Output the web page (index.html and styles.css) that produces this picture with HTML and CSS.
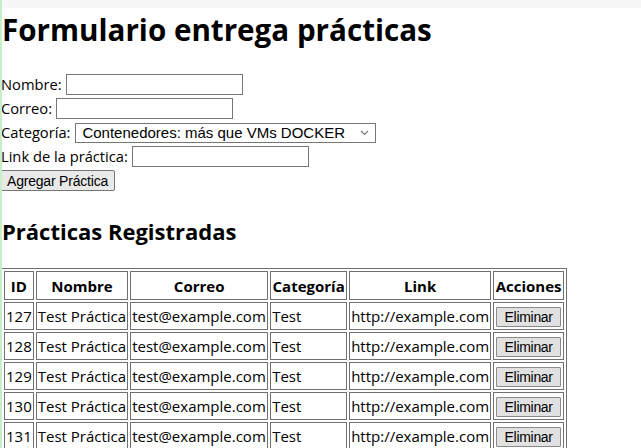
FILE: index.html
```html
<!DOCTYPE html>
<html lang="es">
<head>
<meta charset="utf-8">
<title>Formulario entrega prácticas</title>
<link rel="stylesheet" href="styles.css">
</head>
<body>
<div class="topbar"></div>
<div class="page">
  <h1 class="title">Formulario entrega prácticas</h1>
  <form class="form">
    <div class="row"><label>Nombre:</label><input class="field" type="text"></div>
    <div class="row"><label>Correo:</label><input class="field" type="text"></div>
    <div class="row"><label>Categoría:</label>
      <span class="select-wrap">
        <select class="select"><option>Contenedores: más que VMs DOCKER</option></select>
        <svg class="chev" width="9" height="6" viewBox="0 0 9 6"><path d="M1 1 L4.5 4.5 L8 1" fill="none" stroke="#777" stroke-width="1.2"/></svg>
      </span>
    </div>
    <div class="row"><label>Link de la práctica:</label><input class="field" type="text"></div>
    <div class="row"><button class="btn" type="button">Agregar Práctica</button></div>
  </form>
  <h2 class="subtitle">Prácticas Registradas</h2>
  <table class="grid">
    <thead>
      <tr><th class="c-id">ID</th><th class="c-nom">Nombre</th><th class="c-cor">Correo</th><th class="c-cat">Categoría</th><th class="c-lnk">Link</th><th class="c-acc">Acciones</th></tr>
    </thead>
    <tbody>
      <tr><td>127</td><td>Test Práctica</td><td>test@example.com</td><td>Test</td><td>http://example.com</td><td class="act"><button class="del" type="button">Eliminar</button></td></tr>
      <tr><td>128</td><td>Test Práctica</td><td>test@example.com</td><td>Test</td><td>http://example.com</td><td class="act"><button class="del" type="button">Eliminar</button></td></tr>
      <tr><td>129</td><td>Test Práctica</td><td>test@example.com</td><td>Test</td><td>http://example.com</td><td class="act"><button class="del" type="button">Eliminar</button></td></tr>
      <tr><td>130</td><td>Test Práctica</td><td>test@example.com</td><td>Test</td><td>http://example.com</td><td class="act"><button class="del" type="button">Eliminar</button></td></tr>
      <tr><td>131</td><td>Test Práctica</td><td>test@example.com</td><td>Test</td><td>http://example.com</td><td class="act"><button class="del" type="button">Eliminar</button></td></tr>
    </tbody>
  </table>
</div>
</body>
</html>
```

FILE: styles.css
```css
html, body {
  margin: 0;
  padding: 0;
  background: #ffffff;
  overflow: hidden;
}
body {
  position: relative;
  font-family: "Open Sans", "Noto Sans", sans-serif;
  font-size: 14.7px;
  color: #000;
  min-height: 448px;
}
body::before {
  content: "";
  position: absolute;
  left: 0;
  top: 0;
  bottom: 0;
  width: 2px;
  background: #c8f0c8;
  z-index: 1;
}
.topbar {
  height: 8px;
  background: #f7f7f7;
}
.page {
  padding-left: 1px;
}
.title {
  font-size: 29.6px;
  font-weight: 700;
  margin: 4px 0 26px 1px;
  line-height: 36px;
}
.form {
  display: flex;
  flex-direction: column;
  gap: 3px;
}
.row {
  display: flex;
  align-items: center;
  gap: 4px;
  height: 21px;
}
.row label {
  line-height: 21px;
}
.field {
  width: 177px;
  height: 21px;
  box-sizing: border-box;
  border: 1px solid #767676;
  padding: 1px 2px;
  margin: 0;
  font-family: "Liberation Sans", Arial, sans-serif;
  font-size: 13px;
}
.select-wrap {
  position: relative;
  display: inline-flex;
  margin-left: 1px;
}
.select {
  appearance: none;
  -webkit-appearance: none;
  width: 301px;
  height: 20px;
  box-sizing: border-box;
  border: 1px solid #767676;
  border-radius: 0;
  margin: 0;
  padding: 0 20px 0 6px;
  font-family: "Liberation Sans", Arial, sans-serif;
  font-size: 15px;
  line-height: 18px;
  background: #fff;
  color: #000;
}
.chev {
  position: absolute;
  right: 7px;
  top: 7px;
  pointer-events: none;
}
.btn {
  height: 21px;
  padding: 0 6px;
  margin: 0 0 0 -1px;
  border: 1px solid #767676;
  background: #e9e9e9;
  border-radius: 2px;
  font-family: "Liberation Sans", Arial, sans-serif;
  font-size: 14px;
  letter-spacing: -0.2px;
  color: #000;
}
.subtitle {
  font-size: 22px;
  font-weight: 700;
  margin: 26px 0 23px 1px;
  line-height: 28px;
}
.grid {
  border: 1px solid #707070;
  border-collapse: separate;
  border-spacing: 2px;
  table-layout: fixed;
}
.grid th, .grid td {
  border: 1px solid #707070;
  padding: 1px;
  white-space: nowrap;
  overflow: hidden;
}
.grid th {
  height: 25px;
  font-size: 15px;
  font-weight: 700;
  text-align: center;
}
.grid td {
  height: 24px;
  font-size: 15px;
  text-align: left;
}
.c-id { width: 25px; }
.c-nom { width: 87px; }
.c-cor { width: 134px; }
.c-cat { width: 73px; }
.c-lnk { width: 138px; }
.c-acc { width: 67px; }
.grid td.act {
  text-align: center;
}
.del {
  height: 20px;
  width: 65px;
  padding: 0;
  margin: 0;
  border: 1px solid #8a8a8a;
  background: #e1e1e1;
  border-radius: 1px;
  font-family: "Liberation Sans", Arial, sans-serif;
  font-size: 14px;
  letter-spacing: -0.3px;
  color: #000;
}
```
